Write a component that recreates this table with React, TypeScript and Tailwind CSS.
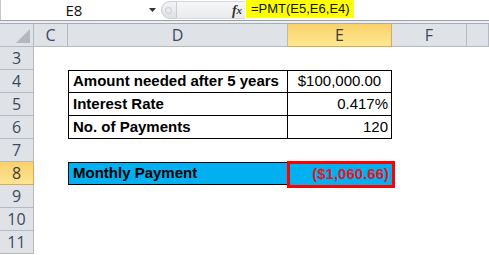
import React from "react";

const W = [34, 34, 220, 104, 75, 22];

function RowHead({ n, sel }: { n: number; sel?: boolean }) {
  return (
    <div
      className={
        "w-[34px] h-[23px] shrink-0 flex items-center justify-center border-r border-b text-[16px] " +
        (sel
          ? "bg-gradient-to-b from-[#f9d16a] to-[#fde493] border-[#e2a84a] text-[#3c3c3c]"
          : "bg-[#dfe3e8] border-[#b6bac0] text-[#3a4a5e]")
      }
      style={{ fontFamily: '"Open Sans", "Noto Sans", sans-serif' }}
    >
      {n}
    </div>
  );
}

function Blank({ w }: { w: number }) {
  return <div className="h-[23px] shrink-0 bg-white" style={{ width: w }} />;
}

export default function App() {
  const cellFont = { fontFamily: '"Liberation Sans", Arial, sans-serif' };
  return (
    <div className="w-[489px] h-[255px] bg-white overflow-hidden relative select-none">
      {/* formula bar */}
      <div className="h-[20px] flex items-stretch bg-white border-l border-[#c8c8c8]">
        <div className="w-[146px] flex items-center justify-center text-[15px] text-[#111]" style={{ fontFamily: '"Open Sans", sans-serif' }}>
          E8
        </div>
        <div className="w-[10px] flex items-center justify-center">
          <svg width="7" height="4" viewBox="0 0 7 4"><path d="M0 0h7L3.5 4z" fill="#333" /></svg>
        </div>
        <div className="w-[72px] flex items-center">
          <div className="ml-[4px] w-[16px] h-[18px] rounded-l-full border border-[#c8ccd2] bg-gradient-to-b from-[#f3f4f6] to-[#dde0e4] flex items-center justify-start">
            <div className="ml-[3px] w-[7px] h-[7px] rounded-full bg-[#e8eaed] border border-[#c9ccd0]" />
          </div>
          <div className="flex-1 h-[18px] border-y border-[#d6d8dc] bg-gradient-to-b from-[#f5f6f7] to-[#e9ebee]" />
        </div>
        <div className="w-[16px] flex items-center justify-center bg-gradient-to-b from-[#f5f6f7] to-[#e9ebee] border-y border-[#d6d8dc] h-[18px] mt-[1px] text-[14px] italic font-bold text-[#333]" style={{ fontFamily: '"Liberation Serif", serif' }}>
          f<span className="text-[11px]">x</span>
        </div>
        <div className="ml-[1px] w-[108px] h-[18px] bg-[#ffff00] flex items-center pl-[5px] text-[13px] text-[#111] whitespace-nowrap" style={{ fontFamily: '"Liberation Sans", sans-serif' }}>
          =PMT(E5,E6,E4)
        </div>
      </div>
      <div className="h-[1px] bg-[#9da1a7]" />
      <div className="h-[2px] bg-[#eceef1]" />
      {/* column headers */}
      <div className="flex h-[24px] border-t border-[#a9adb3]">
        <div className="w-[34px] h-[23px] bg-[#dfe3e8] border-r border-b border-[#b6bac0] relative">
          <svg className="absolute right-[3px] bottom-[3px]" width="14" height="14" viewBox="0 0 14 14">
            <path d="M14 0V14H0z" fill="#b4b8bd" />
          </svg>
        </div>
        {[
          ["C", 34],
          ["D", 220],
          ["E", 104],
          ["F", 75],
          ["", 22],
        ].map(([l, w]) => (
          <div
            key={String(l)}
            className={
              "h-[23px] flex items-center justify-center border-r border-b text-[16px] " +
              (l === "E"
                ? "bg-gradient-to-b from-[#f9d16a] to-[#fde98f] border-[#e2a84a] text-[#3c3c3c]"
                : "bg-[#dfe3e8] border-[#b6bac0] text-[#3a4a5e]")
            }
            style={{ width: Number(w), fontFamily: '"Open Sans", "Noto Sans", sans-serif' }}
          >
            {l}
          </div>
        ))}
      </div>
      {/* rows */}
      {[3, 4, 5, 6, 7, 8, 9, 10, 11].map((n) => {
        const label =
          n === 4 ? "Amount needed after 5 years" : n === 5 ? "Interest Rate" : n === 6 ? "No. of Payments" : null;
        const value = n === 4 ? "$100,000.00" : n === 5 ? "0.417%" : n === 6 ? "120" : null;
        return (
          <div key={n} className="flex h-[23px]">
            <RowHead n={n} sel={n === 8} />
            <Blank w={W[1]} />
            {label !== null ? (
              <>
                <div
                  className={"w-[220px] h-[23px] border-l border-r border-black flex items-center pl-[4px] font-bold text-[15px] text-black whitespace-nowrap " + (n === 4 ? "border-t border-b" : "border-b")}
                  style={cellFont}
                >
                  {label}
                </div>
                <div
                  className={"w-[104px] h-[23px] border-r border-black flex items-center text-[15px] text-black " + (n === 4 ? "border-t border-b justify-center" : "border-b justify-end pr-[3px]")}
                  style={cellFont}
                >
                  {value}
                </div>
              </>
            ) : n === 8 ? (
              <>
                <div className="w-[220px] h-[23px] bg-[#00b0f0] border border-black flex items-center pl-[4px] font-bold text-[15px] text-black" style={cellFont}>
                  Monthly Payment
                </div>
                <div className="relative w-[104px] h-[23px] bg-[#00b0f0]">
                  <div className="absolute left-[-1px] top-[-1px] w-[108px] h-[27px] border-[3px] border-[#ff0000] flex items-center justify-end pr-[3px] font-bold text-[15px] text-[#e8151c]" style={cellFont}>
                    ($1,060.66)
                  </div>
                </div>
              </>
            ) : (
              <>
                <Blank w={W[2]} />
                <Blank w={W[3]} />
              </>
            )}
            <Blank w={W[4]} />
            <Blank w={W[5]} />
          </div>
        );
      })}
    </div>
  );
}
